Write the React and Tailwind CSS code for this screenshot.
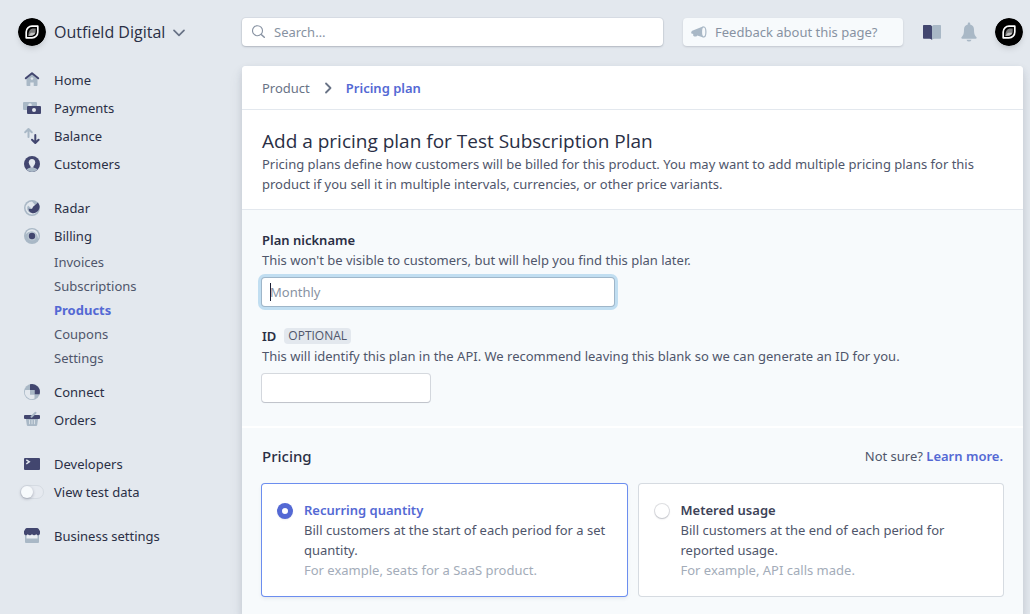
import React from "react";

const DARK = "#42466f";
const LIGHT = "#a9b8c6";

function Avatar() {
  return (
    <svg className="block size-7 rounded-full shadow-md" viewBox="0 0 28 28" aria-hidden="true">
      <circle cx="14" cy="14" r="14" fill="#000" />
      <path d="M8.200 19.800V14A5.800 5.800 0 0 1 14 8.200h5.800V14A5.800 5.800 0 0 1 14 19.800Z" fill="none" stroke="#fff" strokeWidth="1.700" strokeLinejoin="round" />
      <path d="M10.300 17.700c0-4 1.500-6.500 4.200-7.200h3.200V13c0 2.800-1.700 4.700-4.500 4.700Z" fill="#7a7a7a" />
      <path d="M10.300 17.700 13 14.800h4.200c-.6 1.700-2 2.900-4 2.900Z" fill="#c4c4c4" />
    </svg>
  );
}

const icons = {
  home: (
    <>
      <path d="M2.500 7 8 2.200 13.500 7v6.200a.8.800 0 0 1-.8.800H9.700v-3.500H6.300V14h-3a.8.800 0 0 1-.8-.8Z" fill={LIGHT} />
      <path d="M8 5 9.600 6.600 8 8.200 6.400 6.600Z" fill="#e3e8ee" />
      <path d="M1.800 6.300 8 1.200l6.200 5.100" fill="none" stroke={DARK} strokeWidth="2" strokeLinecap="round" strokeLinejoin="round" />
    </>
  ),
  payments: (
    <>
      <rect x="-1" y="2" width="14" height="8" rx="1" fill={LIGHT} />
      <circle cx="6" cy="5" r="1.800" fill="#e3e8ee" />
      <rect x="3" y="6" width="14" height="8" rx="1" fill={DARK} />
      <circle cx="10" cy="10" r="2" fill="#e3e8ee" />
    </>
  ),
  balance: (
    <>
      <path d="M4.500 9V1.200M1.200 4.200 4.500 1 7.800 4.200" fill="none" stroke={LIGHT} strokeWidth="2" strokeLinecap="round" strokeLinejoin="round" />
      <path d="M11.300 7v7.800M8 11.700 11.300 15l3.300-3.300" fill="none" stroke={DARK} strokeWidth="2" strokeLinecap="round" strokeLinejoin="round" />
    </>
  ),
  customers: (
    <>
      <circle cx="8" cy="8" r="8" fill={DARK} />
      <path d="M2.300 13.600C3.800 12.200 6 11.500 8 11.500s4.200.7 5.700 2.100A8 8 0 0 1 2.300 13.600Z" fill={LIGHT} />
      <path d="M8 3c2 0 3.200 1.400 3.200 3.300C11.200 8.500 10 10.500 8 10.500S4.800 8.500 4.800 6.300C4.800 4.400 6 3 8 3Z" fill="#e3e8ee" />
      <path d="M6.500 9h3v2.700h-3Z" fill="#e3e8ee" />
    </>
  ),
  radar: (
    <>
      <circle cx="8" cy="8" r="8" fill={LIGHT} />
      <path d="M8 1.500A6.500 6.500 0 1 0 14.500 8L11 5Z" fill="#e3e8ee" />
      <path d="M4 5.500A5 5 0 0 0 6 12.800L8 9Z" fill={LIGHT} />
      <path d="M13.800 2.400A8 8 0 0 1 15.600 6.300C15.700 10 13 13 9.600 13.200 6.500 13.400 4.300 11 4.800 8.200 5.800 9.600 8.300 9.400 8.700 7.600 9 5.900 11.600 4.900 13.800 2.400Z" fill={DARK} />
    </>
  ),
  billing: (
    <>
      <circle cx="8" cy="8" r="8" fill={LIGHT} />
      <path d="M1.600 6.800A6.700 6.700 0 0 1 8 1.300 6.700 6.700 0 0 1 14.700 8c0 1-.2 2-.7 2.900C14 6.500 11 3.600 7.600 3.600 5 3.600 3 4.800 1.600 6.800Z" fill="#e3e8ee" />
      <circle cx="8" cy="8" r="4.500" fill="#b9c5d1" />
      <circle cx="8" cy="8" r="3.200" fill={DARK} />
    </>
  ),
  connect: (
    <>
      <circle cx="8" cy="8" r="8" fill={LIGHT} />
      <path d="M1.200 6H6v4.500h4.500v4.100A7 7 0 0 1 1.200 6Z" fill="#e3e8ee" />
      <path d="M6 .3A8 8 0 0 1 15.600 10.300H10.500V6H6Z" fill={DARK} />
      <path d="M6 6h4.500v4.500H6Z" fill={LIGHT} />
    </>
  ),
  orders: (
    <>
      <path d="M1.800 6h12.400l-1 7a1.200 1.200 0 0 1-1.200 1H4a1.200 1.200 0 0 1-1.200-1Z" fill={LIGHT} />
      <path d="M5.500 8.200v3.600M8 8.200v3.600M10.500 8.200v3.600" stroke="#dbe2e9" strokeWidth=".9" strokeLinecap="round" />
      <rect x="0" y="3" width="16" height="4" rx="1" fill={DARK} />
      <path d="M7.500 4.800 11.500.800" stroke={LIGHT} strokeWidth="2" strokeLinecap="round" />
    </>
  ),
  developers: (
    <>
      <rect x="0" y="2" width="16" height="12" rx="1" fill={DARK} />
      <path d="M2.300 3.800 5.300 5.800 2.300 7.800" fill="none" stroke="#e3e8ee" strokeWidth="1.400" />
    </>
  ),
  business: (
    <>
      <path d="M1 5h14v9a1 1 0 0 1-1 1H2a1 1 0 0 1-1-1Z" fill={LIGHT} />
      <path d="M2.500 5h11v5.500h-11Z" fill="#e9edf2" />
      <path d="M3 0h10c.8 0 1.300.3 1.700 1L16 3.300V4.800A2 2 0 0 1 12.200 6 2.300 2.300 0 0 1 8 6 2.300 2.300 0 0 1 3.800 6 2 2 0 0 1 0 4.800V3.300L1.300 1C1.700.3 2.200 0 3 0Z" fill={DARK} />
    </>
  ),
};

function NavItem({ icon, children }) {
  return (
    <a href="#" className="flex h-7 items-center gap-3.5 text-[#2a2f45]">
      <svg className="size-4 overflow-visible" viewBox="0 0 16 16" aria-hidden="true">
        {icons[icon]}
      </svg>
      {children}
    </a>
  );
}

function SubItem({ active, children }) {
  return (
    <a
      href="#"
      aria-current={active ? "page" : undefined}
      className={active ? "flex h-6 items-center pl-7.5 font-bold text-[#5469d4]" : "flex h-6 items-center pl-7.5 text-[#4f566b]"}
    >
      {children}
    </a>
  );
}

function Sidebar() {
  return (
    <aside className="w-[242px] shrink-0 pt-[18px]">
      <button type="button" className="flex h-7 items-center gap-2 pl-[18px] font-['Open_Sans',sans-serif] text-base font-medium text-[#2a2f45]">
        <Avatar />
        Outfield Digital
        <svg className="size-3" viewBox="0 0 12 12" fill="none" stroke="#697386" strokeWidth="1.700" strokeLinecap="round" strokeLinejoin="round" aria-hidden="true">
          <path d="M1 4.300 6 9.300l5-5" />
        </svg>
      </button>
      <nav className="mt-5 flex flex-col gap-4 pl-6">
        <div>
          <NavItem icon="home">Home</NavItem>
          <NavItem icon="payments">Payments</NavItem>
          <NavItem icon="balance">Balance</NavItem>
          <NavItem icon="customers">Customers</NavItem>
        </div>
        <div>
          <NavItem icon="radar">Radar</NavItem>
          <NavItem icon="billing">Billing</NavItem>
          <div className="mb-2">
            <SubItem>Invoices</SubItem>
            <SubItem>Subscriptions</SubItem>
            <SubItem active>Products</SubItem>
            <SubItem>Coupons</SubItem>
            <SubItem>Settings</SubItem>
          </div>
          <NavItem icon="connect">Connect</NavItem>
          <NavItem icon="orders">Orders</NavItem>
        </div>
        <div>
          <NavItem icon="developers">Developers</NavItem>
          <label className="relative -ml-1 flex h-7 items-center gap-2.5 text-[#2a2f45]">
            <input type="checkbox" role="switch" className="sr-only" />
            <span className="flex h-3.5 w-6 items-center rounded-full border border-[#d5dbe2] bg-[#e6eaf0]">
              <span className="size-3 rounded-full bg-[#f7fafc] shadow-[0_1px_3px_rgba(60,66,87,0.4)]" />
            </span>
            View test data
          </label>
        </div>
        <div>
          <NavItem icon="business">Business settings</NavItem>
        </div>
      </nav>
    </aside>
  );
}

function TopBar() {
  return (
    <header className="flex items-center pt-[18px]">
      <div className="flex h-7 min-w-0 flex-1 items-center gap-2 rounded bg-white px-2.5 shadow-[0_0_0_1px_rgba(60,66,87,0.06),0_1px_2px_rgba(60,66,87,0.25)]">
        <svg className="size-3.5 shrink-0" viewBox="0 0 14 14" fill="none" stroke="#8792a2" strokeWidth="1.100" strokeLinecap="round" aria-hidden="true">
          <circle cx="5.500" cy="5.700" r="5" />
          <path d="m9.500 9.700 2.800 2.600" strokeWidth="1.500" />
        </svg>
        <input type="text" aria-label="Search" placeholder="Search…" className="min-w-0 flex-1 bg-transparent outline-none placeholder:text-[#8792a2]" />
      </div>
      <button type="button" className="ml-5 flex h-7 w-[220px] items-center gap-2 rounded bg-[#f7fafc] px-2 text-[#8792a2] shadow-[0_1px_2px_rgba(60,66,87,0.2)]">
        <svg className="size-4 shrink-0" viewBox="0 0 16 16" aria-hidden="true">
          <path d="M12.500 2.300 1.200 6.700a.8.800 0 0 0-.6.700l-.5 1.300c-.1.300.1.600.5.800L2.200 10v1.200c0 .7.500 1.200 1.200 1.200h1.600c.6 0 1-.4 1.200-1l6.300 2Z" fill={LIGHT} />
          <ellipse cx="12.700" cy="8" rx="2.200" ry="5" fill="#f7fafc" stroke={LIGHT} strokeWidth="1.200" />
        </svg>
        Feedback about this page?
      </button>
      <button type="button" aria-label="Documentation" className="ml-5 flex">
        <svg className="h-4 w-[18px]" viewBox="0 0 18 16" aria-hidden="true">
          <path d="M0 1.800A.8.800 0 0 1 .8 1H6.500C8 1 9 1.600 9 2.500V16c-.6-.8-1.500-1.200-2.500-1.200H.8A.8.800 0 0 1 0 14Z" fill={DARK} />
          <path d="M18 1.800a.8.800 0 0 0-.8-.8h-5.700C10 1 9 1.600 9 2.500V16c.6-.8 1.500-1.200 2.500-1.200h5.700A.8.800 0 0 0 18 14Z" fill={LIGHT} />
        </svg>
      </button>
      <button type="button" aria-label="Notifications" className="ml-5 flex">
        <svg className="h-5 w-4" viewBox="0 0 16 20" aria-hidden="true">
          <path d="M8 .5c.8 0 1.200.5 1.200 1.200v.8C11.700 3 13 5 13 7.500c0 4.500.9 6 2.300 7.500.7.700.3 1.800-.6 1.800H1.300c-.9 0-1.300-1.100-.6-1.800C2.100 13.500 3 12 3 7.500 3 5 4.300 3 6.800 2.500v-.8C6.800 1 7.200.5 8 .5ZM5.500 17.700h5a2.600 2.600 0 0 1-5 0Z" fill={LIGHT} />
        </svg>
      </button>
      <button type="button" aria-label="Account" className="ml-[18px] flex">
        <Avatar />
      </button>
    </header>
  );
}

const fieldShadow = "shadow-[0_0_0_1px_rgba(60,66,87,0.18),0_1px_1px_rgba(60,66,87,0.15)]";

function PricingOption({ title, text, example, checked }) {
  return (
    <label
      className={
        checked
          ? "flex gap-3 rounded-[3px] bg-white p-4 shadow-[0_0_0_1px_#6c8eef,0_2px_4px_rgba(60,66,87,0.12)]"
          : "flex gap-3 rounded-[3px] bg-white p-4 shadow-[0_0_0_1px_#d6dbe1]"
      }
    >
      <input
        type="radio"
        name="pricing"
        defaultChecked={checked}
        className="mt-1 size-3.5 shrink-0 appearance-none rounded-full bg-white shadow-[0_0_0_1px_rgba(60,66,87,0.16),0_1px_2px_rgba(60,66,87,0.2)] checked:border-[4px] checked:border-[#5469d4] checked:shadow-[0_0_0_1px_#5469d4,0_1px_2px_rgba(60,66,87,0.3)]"
      />
      <span className="flex flex-col">
        <span className={checked ? "font-semibold text-[#5469d4]" : "font-semibold text-[#3c4257]"}>{title}</span>
        <span>{text}</span>
        <span className="text-[#a3acb9]">{example}</span>
      </span>
    </label>
  );
}

export default function App() {
  return (
    <div className="flex min-h-screen bg-[#e3e8ee] font-['Noto_Sans','Open_Sans',sans-serif] text-[13px] leading-5 text-[#4f566b]">
      <Sidebar />
      <div className="flex min-w-0 flex-1 flex-col pr-[7px]">
        <TopBar />
        <main className="mt-5 flex flex-1 flex-col rounded-t bg-[#f7fafc] shadow-[0_7px_14px_rgba(60,66,87,0.1),0_3px_6px_rgba(60,66,87,0.12)]">
          <nav aria-label="Breadcrumb" className="flex h-11 items-center gap-3.5 rounded-t border-b border-[#e3e8ee] bg-white px-5">
            <a href="#" className="text-[#697386]">Product</a>
            <svg className="h-3 w-2" viewBox="0 0 8 12" fill="none" stroke="#697386" strokeWidth="1.800" strokeLinecap="round" strokeLinejoin="round" aria-hidden="true">
              <path d="m2 1.500 4.500 4.500-4.500 4.500" />
            </svg>
            <a href="#" className="font-semibold text-[#5469d4]">Pricing plan</a>
          </nav>
          <section className="border-b border-[#e3e8ee] bg-white px-5 pt-[18px] pb-[15px]">
            <h1 className="font-['Open_Sans',sans-serif] text-[19px] leading-[26px] text-[#2a2f45]">Add a pricing plan for Test Subscription Plan</h1>
            <p>
              Pricing plans define how customers will be billed for this product. You may want to add multiple pricing plans for this product if you sell it in multiple intervals, currencies, or other price variants.
            </p>
          </section>
          <section className="border-b-2 border-white px-5 pt-5 pb-6">
            <label htmlFor="nickname" className="block font-semibold text-[#2a2f45]">Plan nickname</label>
            <p>This won't be visible to customers, but will help you find this plan later.</p>
            <div className="relative mt-2 w-[352px]">
              <input
                id="nickname"
                type="text"
                placeholder="Monthly"
                className="block h-7 w-full rounded-[3px] bg-white px-2 outline-none placeholder:text-[#8792a2] shadow-[0_0_0_1px_#9fb6c9,0_0_0_4px_#c1def1]"
              />
              <span className="absolute top-[5px] left-2 h-[18px] w-px bg-[#1a1f36]" />
            </div>
            <div className="mt-5 flex items-center gap-2">
              <label htmlFor="plan-id" className="font-semibold text-[#2a2f45]">ID</label>
              <span className="rounded bg-[#e3e8ee] px-1 font-['Open_Sans',sans-serif] text-xs leading-4 font-medium">OPTIONAL</span>
            </div>
            <p>This will identify this plan in the API. We recommend leaving this blank so we can generate an ID for you.</p>
            <input id="plan-id" type="text" className={`mt-2 block h-7 w-[168px] rounded-[3px] bg-white px-2 outline-none ${fieldShadow}`} />
          </section>
          <section className="px-5 py-4">
            <div className="flex items-center justify-between">
              <h2 className="text-[15px] leading-6 font-medium text-[#2a2f45]">Pricing</h2>
              <p>
                Not sure? <a href="#" className="font-semibold text-[#5469d4]">Learn more.</a>
              </p>
            </div>
            <div className="mt-4 grid grid-cols-2 gap-3">
              <PricingOption checked title="Recurring quantity" text="Bill customers at the start of each period for a set quantity." example="For example, seats for a SaaS product." />
              <PricingOption title="Metered usage" text="Bill customers at the end of each period for reported usage." example="For example, API calls made." />
            </div>
          </section>
        </main>
      </div>
    </div>
  );
}
